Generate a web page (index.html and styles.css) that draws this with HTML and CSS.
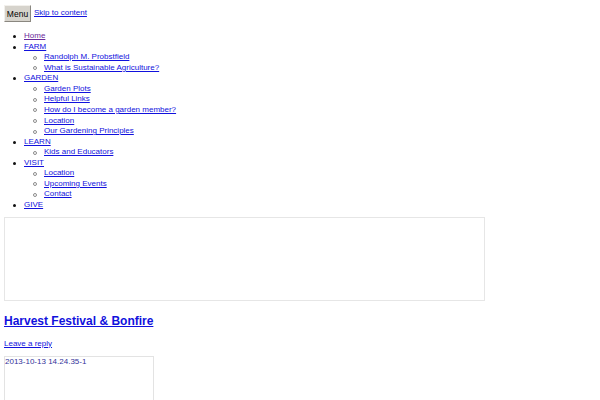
FILE: index.html
```html
<!DOCTYPE html>
<html>
    <head>
        <title>Harvest Festival &amp; Bonfire</title>
        <meta charset="UTF-8">
        <link rel="stylesheet" href="styles.css">
    </head>
    <body>
        <div class="topbar">
            <button class="menu">Menu</button>
            <a href="#content">Skip to content</a>
        </div>
        <ul class="nav">
            <li><a class="seen" href="#">Home</a></li>
            <li><a href="#">FARM</a>
                <ul>
                    <li><a href="#">Randolph M. Probstfield</a></li>
                    <li><a href="#">What is Sustainable Agriculture?</a></li>
                </ul>
            </li>
            <li><a href="#">GARDEN</a>
                <ul>
                    <li><a href="#">Garden Plots</a></li>
                    <li><a href="#">Helpful Links</a></li>
                    <li><a href="#">How do I become a garden member?</a></li>
                    <li><a href="#">Location</a></li>
                    <li><a href="#">Our Gardening Principles</a></li>
                </ul>
            </li>
            <li><a href="#">LEARN</a>
                <ul>
                    <li><a href="#">Kids and Educators</a></li>
                </ul>
            </li>
            <li><a href="#">VISIT</a>
                <ul>
                    <li><a href="#">Location</a></li>
                    <li><a href="#">Upcoming Events</a></li>
                    <li><a href="#">Contact</a></li>
                </ul>
            </li>
            <li><a href="#">GIVE</a></li>
        </ul>
        <div class="banner"></div>
        <div id="content" class="post">
            <h1 class="title"><a href="#">Harvest Festival &amp; Bonfire</a></h1>
            <a class="reply" href="#">Leave a reply</a>
            <div class="photo">2013-10-13 14.24.35-1</div>
        </div>
    </body>
</html>
```

FILE: styles.css
```css
body{
    margin: 5px 4px;
    font-family: "Liberation Sans", Arial, sans-serif;
    font-size: 8px;
    line-height: 10.56px;
    color: black;
}

a{
    color: #1111dd;
}

a.seen{
    color: #6a2a9a;
}

.topbar{
    display: flex;
    align-items: center;
    gap: 3px;
}

.menu{
    width: 27px;
    height: 17px;
    padding: 0px;
    font-family: "Liberation Sans", Arial, sans-serif;
    font-size: 8.5px;
    color: black;
    background-color: #d6d3cc;
    border: 1px solid #8a8780;
    border-top-color: #f2f0ec;
    border-left-color: #f2f0ec;
}

.nav{
    margin: 9px 0px 6px 0px;
    padding-left: 20px;
    list-style: none;
}

.nav li{
    position: relative;
}

.nav li::before{
    content: "";
    position: absolute;
    left: -11px;
    top: 4px;
    width: 3px;
    height: 3px;
    border-radius: 50%;
    background-color: #111111;
}

.nav ul{
    margin: 0px;
    padding-left: 20px;
    list-style: none;
}

.nav ul li::before{
    left: -11px;
    top: 3.5px;
    width: 2px;
    height: 2px;
    background-color: transparent;
    border: 1px solid #8c8c8c;
}

.banner{
    height: 82px;
    width: 479px;
    border: 1px solid #e6e6e6;
}

.post{
    padding-top: 12px;
}

.title{
    margin: 0px 0px 10px 0px;
    font-size: 12px;
    line-height: 16px;
    font-weight: bold;
}

.reply{
    display: block;
    font-size: 8px;
    line-height: 10px;
    margin-bottom: 7px;
}

.photo{
    width: 148px;
    height: 60px;
    border: 1px solid #e3e3e3;
    color: #33339a;
    font-size: 8px;
    line-height: 10px;
    padding: 0px;
}
```
